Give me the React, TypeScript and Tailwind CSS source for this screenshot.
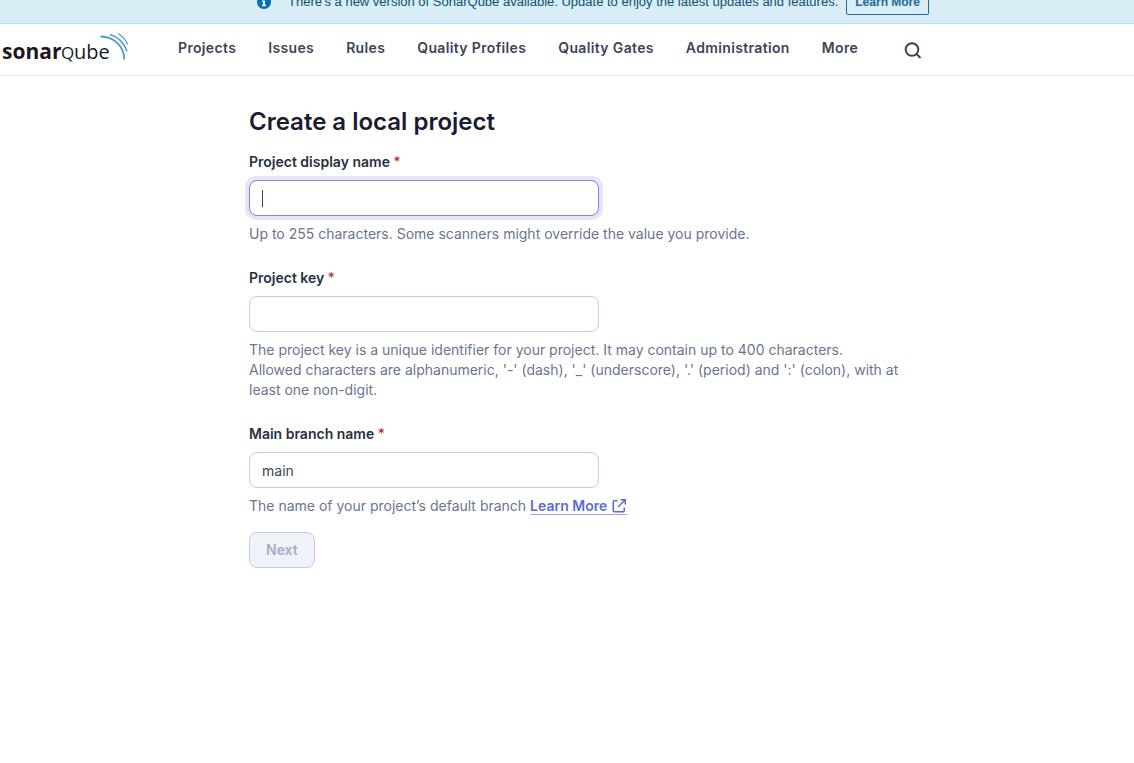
import type { ReactNode } from 'react';

const navItems = ['Projects', 'Issues', 'Rules', 'Quality Profiles', 'Quality Gates', 'Administration', 'More'];

function Banner() {
  return (
    <div className="-mt-[19px] flex items-center border-b border-[#b1dff3] bg-[#d9edf7] py-2 pl-[257px] font-['Liberation_Sans',Arial,sans-serif] text-[13px] text-[#0e516f]">
      <svg className="h-3.5 w-3.5 shrink-0" viewBox="0 0 14 14" aria-hidden="true">
        <circle cx="7" cy="7" r="7" fill="#0271b9" />
        <path d="M6 2.4h2v2H6zM5 5.5h3v4.3h1v1.4H5V9.800h1V6.900H5z" fill="#fff" />
      </svg>
      <span className="ml-[17px] whitespace-nowrap">
        There's a new version of SonarQube available. Update to enjoy the latest updates and features.
      </span>
      <a
        href="#update"
        className="ml-2 whitespace-nowrap rounded-xs border border-[#236a97] px-2 text-xs leading-6 font-bold text-[#236a97]"
      >
        Learn More
      </a>
    </div>
  );
}

function Logo() {
  return (
    <a href="#home" aria-label="SonarQube" className="block h-[34px] w-[130px]">
      <svg viewBox="0 0 130 34" className="h-full w-full" fontFamily="'Open Sans', sans-serif" fill="#1b171b">
        <text x="2" y="26" fontSize="21" fontWeight="700">sonar</text>
        <text x="61" y="26" fontSize="17" fontWeight="500">Q</text>
        <text x="74" y="26" fontSize="20" fontWeight="500">ube</text>
        <g fill="none" stroke="#4e9bcd">
          <path d="M100.500 3.500C114 3.500 124.300 13.500 124.300 26.500" strokeWidth="1.800" />
          <path d="M110 1.500C118 4 124.500 10.500 127 18.500" strokeWidth="1.500" />
          <path d="M118 0.500C122 3 125.500 6.500 127.700 11.500" strokeWidth="1.200" />
        </g>
      </svg>
    </a>
  );
}

function Header() {
  return (
    <header className="flex h-[52px] items-center border-b border-[#e6e8ec] bg-white">
      <Logo />
      <nav className="ml-12 flex items-center gap-8 pb-1">
        {navItems.map((item) => (
          <a key={item} href="#nav" className="whitespace-nowrap text-sm leading-5 font-semibold tracking-wide text-[#3e4357]">
            {item}
          </a>
        ))}
      </nav>
      <button type="button" aria-label="Search" className="ml-11 flex h-5 w-5 items-center justify-center">
        <svg viewBox="0 0 20 20" className="h-5 w-5" fill="none" stroke="#3e4357" strokeWidth="2">
          <circle cx="10" cy="9.500" r="6.300" />
          <path d="m14.500 14 4 4" />
        </svg>
      </button>
    </header>
  );
}

interface FieldProps {
  id: string;
  label: string;
  value?: string;
  focused?: boolean;
  children: ReactNode;
}

function Field({ id, label, value, focused, children }: FieldProps) {
  return (
    <div className="flex flex-col gap-2">
      <label htmlFor={id} className="text-sm leading-5 font-semibold text-[#292f40]">
        {label} <span className="font-normal text-[#b4231c]">*</span>
      </label>
      <div className="relative max-w-[350px]">
        <input
          id={id}
          type="text"
          required
          autoFocus={focused}
          defaultValue={value}
          className="peer block h-9 w-full rounded-lg border border-[#c5cddf] bg-white px-3 text-sm text-[#3e4357] caret-transparent outline-none focus:border-[#7b87d9] focus:ring-4 focus:ring-[#e3e6f6]"
        />
        {focused && (
          <span
            aria-hidden="true"
            className="pointer-events-none absolute inset-y-0 left-[13px] my-auto hidden h-[17px] w-px bg-[#3e4357] peer-focus:block"
          />
        )}
      </div>
      <p className="text-sm leading-5 text-[#6a7590]">{children}</p>
    </div>
  );
}

export default function App() {
  return (
    <div className="flow-root bg-white font-['Inter',sans-serif]">
      <Banner />
      <Header />
      <main className="ml-[249px] max-w-[660px] pt-7">
        <h1 className="text-2xl leading-9 font-semibold text-[#1a1b2e]">Create a local project</h1>
        <form className="mt-3 flex flex-col gap-6">
          <Field id="name" label="Project display name" focused>
            Up to 255 characters. Some scanners might override the value you provide.
          </Field>
          <Field id="key" label="Project key">
            The project key is a unique identifier for your project. It may contain up to 400 characters.
            <br />
            Allowed characters are alphanumeric, '-' (dash), '_' (underscore), '.' (period) and ':' (colon), with at
            least one non-digit.
          </Field>
          <Field id="branch" label="Main branch name" value="main">
            The name of your project’s default branch{' '}
            <a href="#docs" className="inline-flex items-center gap-1 border-b border-[#9aa4f0] leading-4 font-semibold text-[#5d6cd0]">
              Learn More
              <svg viewBox="0 0 16 16" className="h-4 w-4" fill="none" stroke="currentColor" strokeWidth="1.500">
                <path d="M6.500 2.750H3.250a1 1 0 0 0-1 1v9a1 1 0 0 0 1 1h9a1 1 0 0 0 1-1V9.500M7 9l6.500-6.500M9.500 1.750h4.750V6.500" />
              </svg>
            </a>
          </Field>
          <button
            type="submit"
            disabled
            className="-mt-2 h-9 self-start rounded-lg border border-[#c5cddf] bg-[#eff2f9] px-4 text-sm font-semibold text-[#a6adc5]"
          >
            Next
          </button>
        </form>
      </main>
    </div>
  );
}
